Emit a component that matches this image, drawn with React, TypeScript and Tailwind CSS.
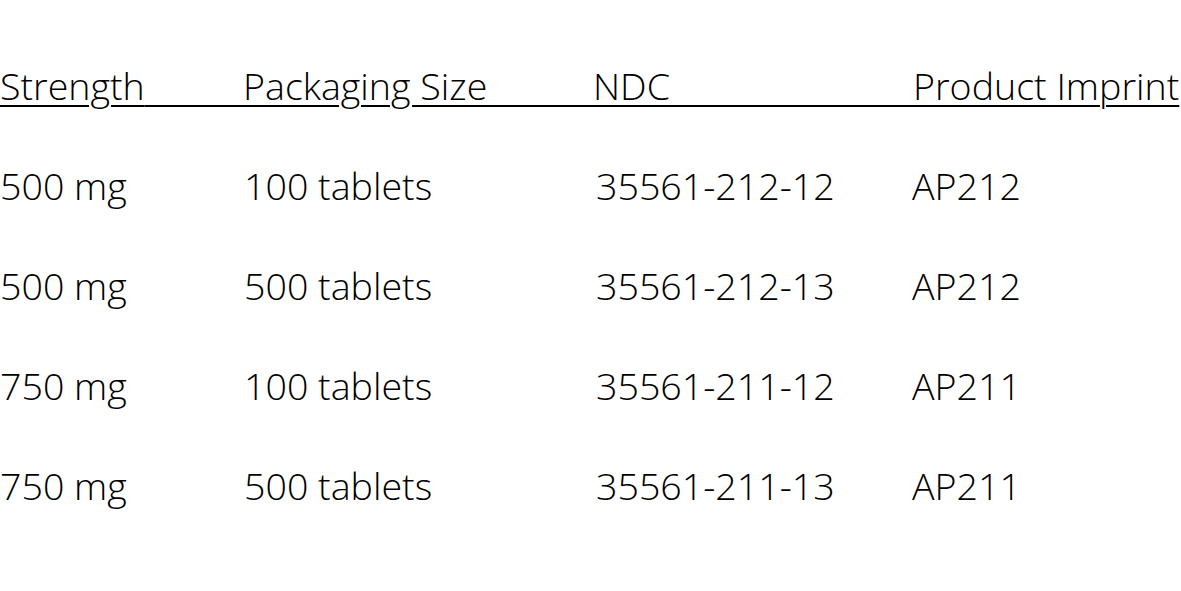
import React from 'react';

const rows = [
  ['500 mg', '100 tablets', '35561-212-12', 'AP212'],
  ['500 mg', '500 tablets', '35561-212-13', 'AP212'],
  ['750 mg', '100 tablets', '35561-211-12', 'AP211'],
  ['750 mg', '500 tablets', '35561-211-13', 'AP211'],
];

const headers = ['Strength', 'Packaging Size', 'NDC', 'Product Imprint'];
const headWidths = ['w-[243px]', 'w-[350px]', 'w-[320px]', 'flex-1'];
const cellWidths = ['w-[244px]', 'w-[352px]', 'w-[316px]', 'flex-1'];

export default function App() {
  return (
    <div
      className="w-[1181px] h-[591px] bg-white text-black overflow-hidden pt-[36px] text-[37.6px] font-light leading-[100px]"
      style={{ fontFamily: '"Open Sans", sans-serif' }}
    >
      {/* header row, underlined across the full width */}
      <div className="flex">
        {headers.map((h, i) => (
          <div key={h} className={`${headWidths[i]} shrink-0 overflow-hidden whitespace-nowrap`}>
            <span className="underline decoration-[2px] underline-offset-[5px]">{h}</span>
            {i < 3 && (
              <span className="inline-block h-0 w-[400px] border-b-2 border-black mb-[-7px] align-baseline" />
            )}
          </div>
        ))}
      </div>
      {rows.map((r, ri) => (
        <div key={ri} className="flex">
          {r.map((c, ci) => (
            <div key={ci} className={`${cellWidths[ci]} shrink-0 whitespace-nowrap`}>
              {c}
            </div>
          ))}
        </div>
      ))}
    </div>
  );
}
